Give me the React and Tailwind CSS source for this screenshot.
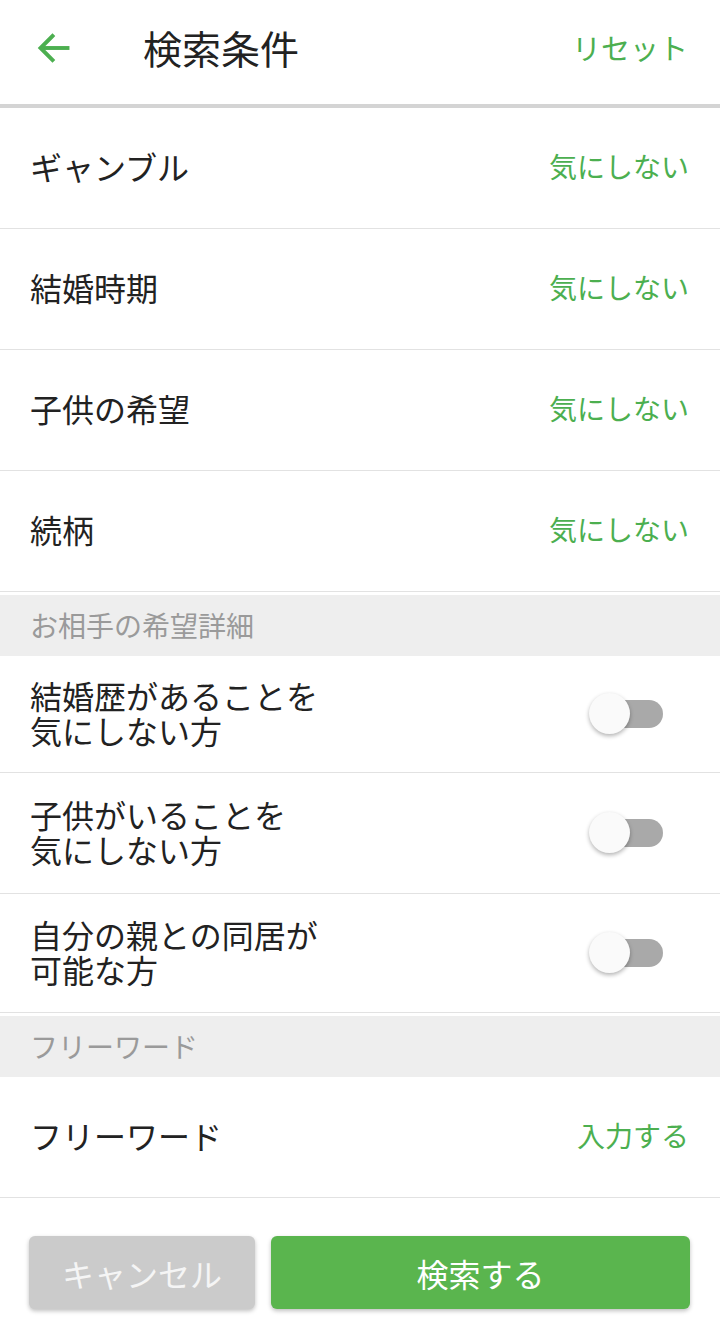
import React, { useState } from 'react';

const font = { fontFamily: '"Noto Sans CJK JP", "Noto Sans", sans-serif' };

function Row({ label, value }) {
    return (
        <div className="h-[121px] flex items-center justify-between pl-[30px] pr-[31px] pb-[4px] border-b border-[#e2e2e2]">
            <span className="text-[32px] text-[#222]">{label}</span>
            <span className="text-[28px] text-[#4caf50]">{value}</span>
        </div>
    );
}

function Section({ title }) {
    return (
        <div className="h-[61px] bg-[#eeeeee] flex items-center pl-[30px] pb-[2px]">
            <span className="text-[28px] text-[#9a9a9a]">{title}</span>
        </div>
    );
}

function Toggle({ on, onClick }) {
    return (
        <button onClick={onClick} className="relative w-[75px] h-[42px] flex items-center" aria-label="toggle">
            <span className={`absolute left-[8px] w-[66px] h-[28px] rounded-full ${on ? 'bg-[#a5d6a7]' : 'bg-[#a9a9a9]'}`} />
            <span className={`absolute top-0 w-[41px] h-[41px] rounded-full shadow-[0_2px_4px_rgba(0,0,0,0.3)] ${on ? 'left-[35px] bg-[#4caf50]' : 'left-0 bg-[#fafafa]'}`} />
        </button>
    );
}

function ToggleRow({ lines, h }) {
    const [on, setOn] = useState(false);
    return (
        <div className={`${h} flex items-center justify-between pl-[30px] pr-[56px] border-b border-[#e2e2e2]`}>
            <div className="text-[32px] leading-[35px] text-[#222] pb-[3px]">
                {lines.map((l) => <div key={l}>{l}</div>)}
            </div>
            <Toggle on={on} onClick={() => setOn(!on)} />
        </div>
    );
}

export default function App() {
    return (
        <div className="w-[720px] h-[1343px] bg-white flex flex-col" style={font}>
            {/* header */}
            <div className="h-[108px] shrink-0 flex items-center pl-[36px] pr-[32px] pb-[9px] border-b-[4px] border-[#d4d4d4]">
                <svg width="36" height="36" viewBox="0 0 24 24" fill="none" stroke="#4caf50" strokeWidth="2.6" strokeLinecap="square">
                    <path d="M21 12H4" />
                    <path d="M11 4l-8 8 8 8" strokeLinejoin="miter" />
                </svg>
                <h1 className="ml-[71px] text-[39px] text-[#222] flex-1">検索条件</h1>
                <span className="text-[29px] text-[#4caf50]">リセット</span>
            </div>

            <Row label="ギャンブル" value="気にしない" />
            <Row label="結婚時期" value="気にしない" />
            <Row label="子供の希望" value="気にしない" />
            <Row label="続柄" value="気にしない" />

            <div className="h-[3px] shrink-0" />
            <Section title="お相手の希望詳細" />
            <ToggleRow lines={['結婚歴があることを', '気にしない方']} h="h-[117px]" />
            <ToggleRow lines={['子供がいることを', '気にしない方']} h="h-[121px]" />
            <ToggleRow lines={['自分の親との同居が', '可能な方']} h="h-[119px]" />

            <div className="h-[3px] shrink-0" />
            <Section title="フリーワード" />
            <Row label="フリーワード" value="入力する" />

            {/* footer buttons */}
            <div className="flex gap-[16px] pl-[29px] pr-[30px] pt-[38px]">
                <button className="w-[226px] h-[73px] rounded-[6px] bg-[#cbcbcb] text-[#f5f5f5] text-[32px] shadow-[0_2px_4px_rgba(0,0,0,0.25)]">
                    キャンセル
                </button>
                <button className="flex-1 h-[73px] rounded-[6px] bg-[#5ab54e] text-white text-[32px] shadow-[0_2px_4px_rgba(0,0,0,0.25)]">
                    検索する
                </button>
            </div>
        </div>
    );
}
